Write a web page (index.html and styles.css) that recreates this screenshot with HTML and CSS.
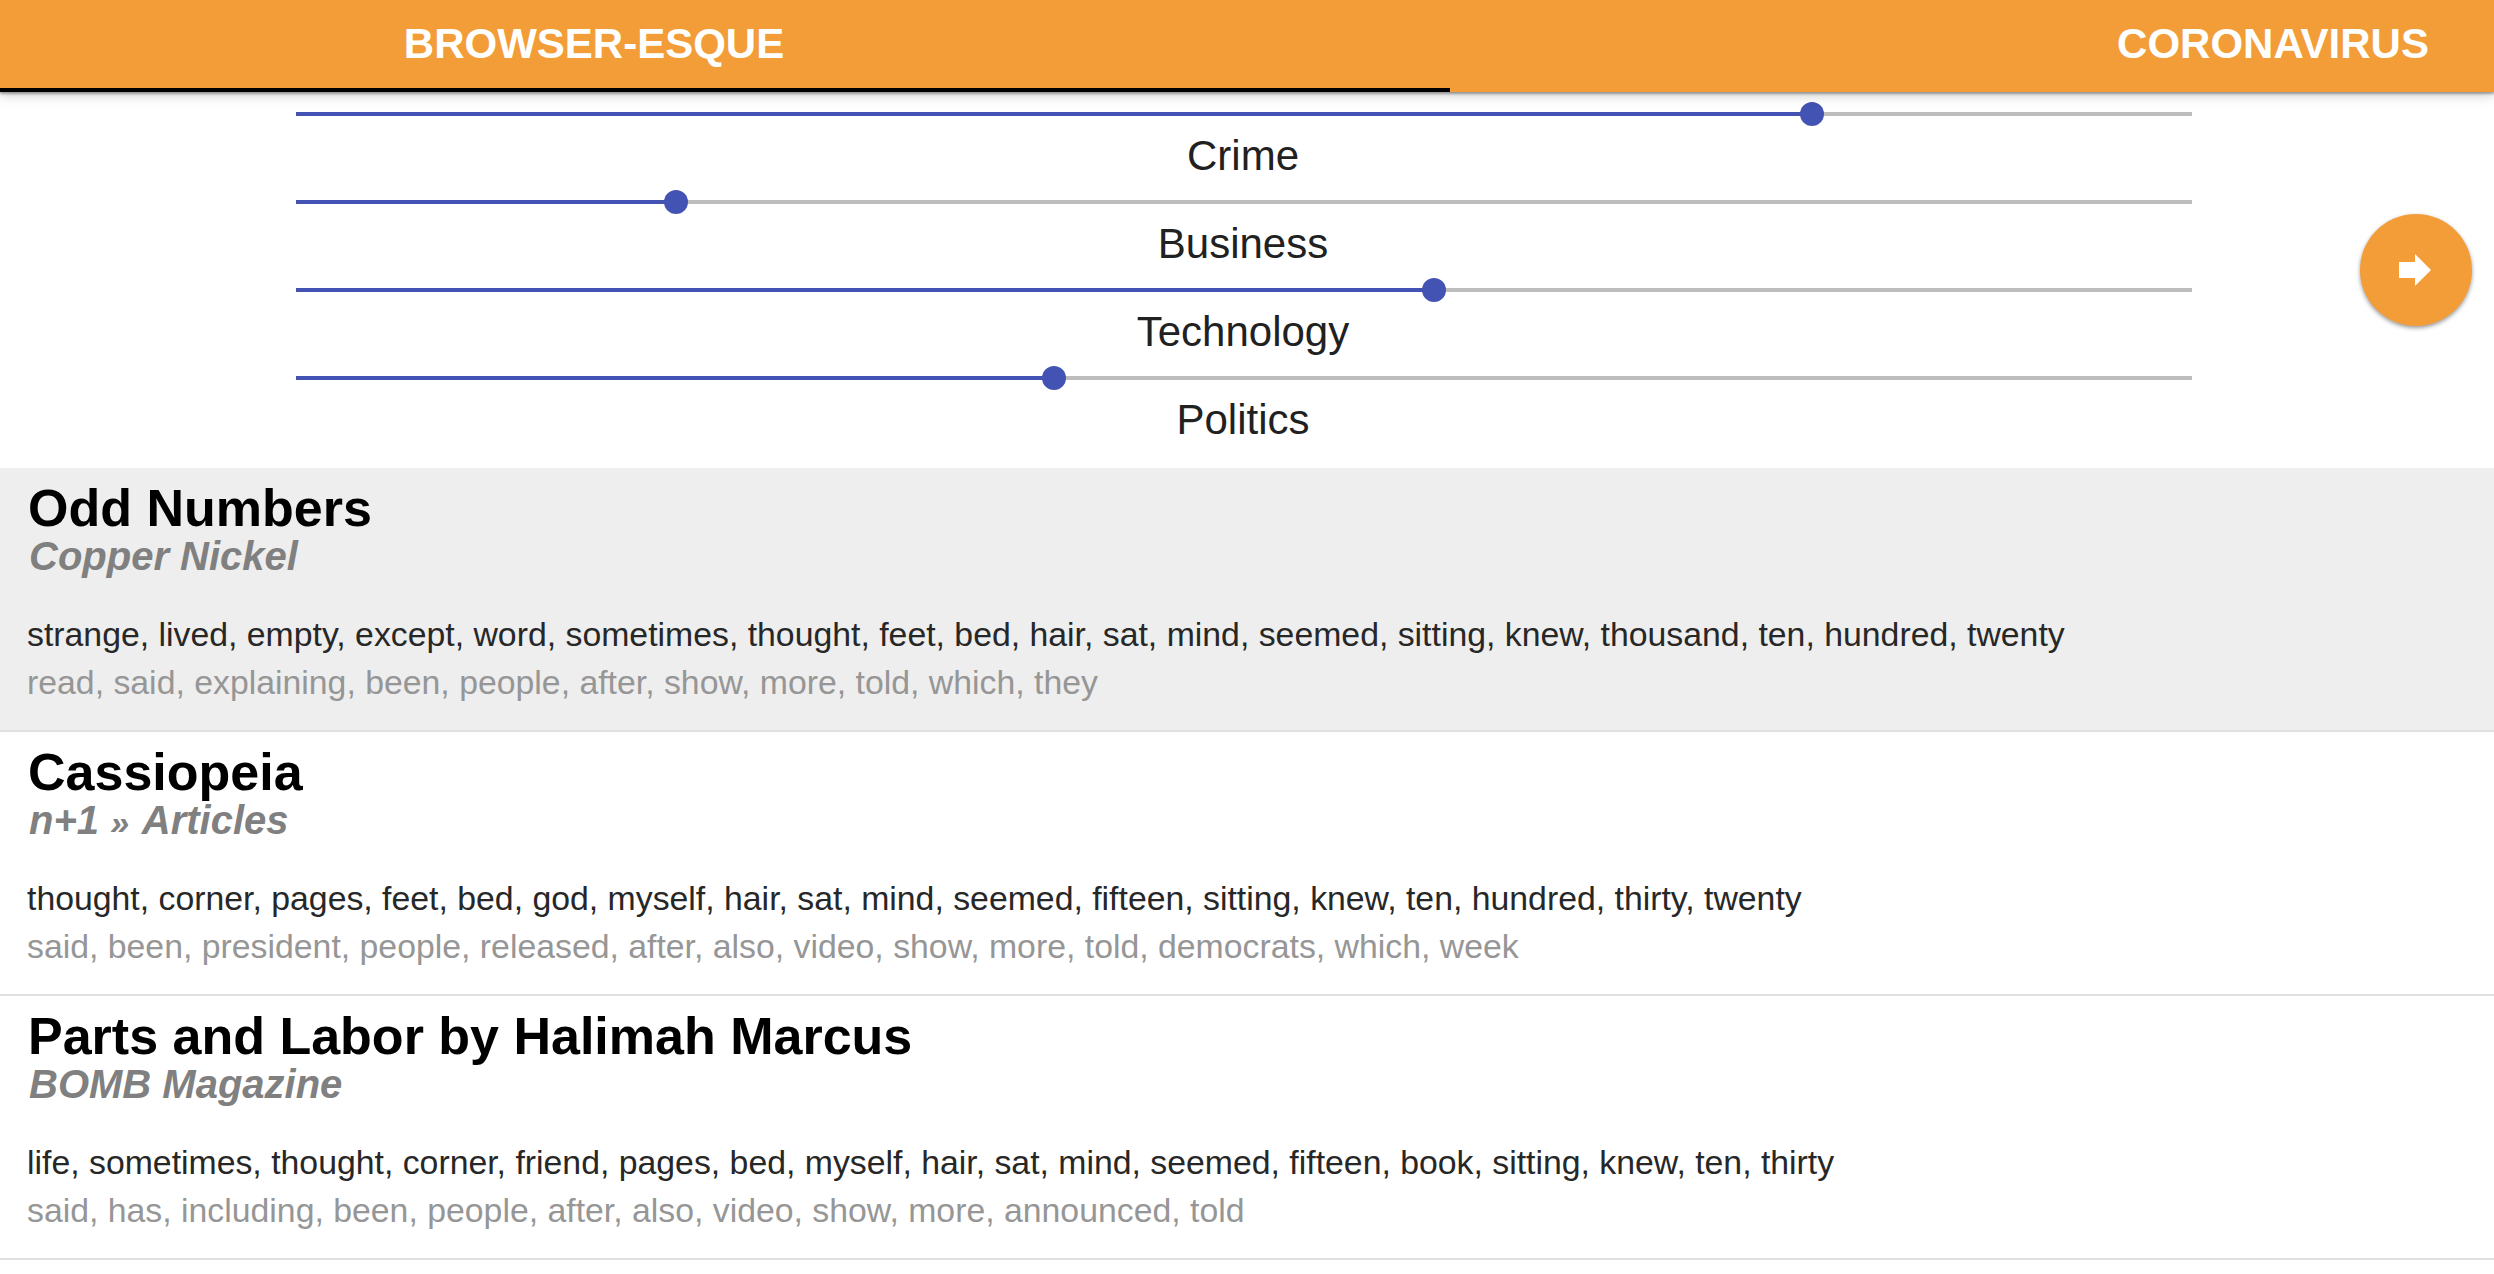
FILE: index.html
```html
<!DOCTYPE html>
<html lang="en">
<head>
<meta charset="utf-8">
<title>Browser-esque</title>
<link rel="stylesheet" href="styles.css">
</head>
<body>
<header class="app-bar">
  <nav class="tabs">
    <a class="tab tab-active">BROWSER-ESQUE</a>
    <a class="tab">CORONAVIRUS</a>
  </nav>
</header>
<section class="sliders">
  <div class="slider">
    <div class="track"><div class="fill" style="width:79.95%"></div><div class="thumb"></div></div>
    <div class="slider-label">Crime</div>
  </div>
  <div class="slider">
    <div class="track"><div class="fill" style="width:20.04%"></div><div class="thumb"></div></div>
    <div class="slider-label">Business</div>
  </div>
  <div class="slider">
    <div class="track"><div class="fill" style="width:60%"></div><div class="thumb"></div></div>
    <div class="slider-label">Technology</div>
  </div>
  <div class="slider">
    <div class="track"><div class="fill" style="width:40%"></div><div class="thumb"></div></div>
    <div class="slider-label">Politics</div>
  </div>
</section>
<main class="articles">
  <article class="article article-selected">
    <h2 class="title">Odd Numbers</h2>
    <h3 class="source">Copper Nickel</h3>
    <p class="words">strange, lived, empty, except, word, sometimes, thought, feet, bed, hair, sat, mind, seemed, sitting, knew, thousand, ten, hundred, twenty</p>
    <p class="words words-muted">read, said, explaining, been, people, after, show, more, told, which, they</p>
  </article>
  <article class="article">
    <h2 class="title">Cassiopeia</h2>
    <h3 class="source">n+1 <span class="guillemet">»</span> Articles</h3>
    <p class="words">thought, corner, pages, feet, bed, god, myself, hair, sat, mind, seemed, fifteen, sitting, knew, ten, hundred, thirty, twenty</p>
    <p class="words words-muted">said, been, president, people, released, after, also, video, show, more, told, democrats, which, week</p>
  </article>
  <article class="article">
    <h2 class="title">Parts and Labor by Halimah Marcus</h2>
    <h3 class="source">BOMB Magazine</h3>
    <p class="words">life, sometimes, thought, corner, friend, pages, bed, myself, hair, sat, mind, seemed, fifteen, book, sitting, knew, ten, thirty</p>
    <p class="words words-muted">said, has, including, been, people, after, also, video, show, more, announced, told</p>
  </article>
</main>
<button class="fab" aria-label="Next">
  <svg width="32" height="32" viewBox="0 0 32 32"><path d="M0 8h16V0l16 16-16 16v-8H0z" fill="#fff"/></svg>
</button>
</body>
</html>
```
FILE: styles.css
```css
* {
  box-sizing: border-box;
}

body {
  margin: 0;
  height: 100vh;
  overflow: hidden;
  background: #fff;
  color: #212121;
  font-family: "Liberation Sans", Arial, Helvetica, sans-serif;
}

.app-bar {
  position: relative;
  height: 92px;
  background: #f39d38;
  box-shadow: 0 2px 2px rgba(0, 0, 0, 0.3), 0 2px 12px rgba(0, 0, 0, 0.25);
}

/* The tab strip is wider than the window and scrolled part of the way. */
.tabs {
  display: flex;
  height: 100%;
  overflow: hidden;
}

.tab {
  flex: none;
  width: 1646px;
  color: #fff;
  font-size: 42px;
  font-weight: bold;
  line-height: 87px;
  text-align: center;
}

.tab-active {
  width: 1712px;
  margin-left: -262px;
  border-bottom: 4px solid #000;
}

.sliders {
  width: 1896px;
  height: 376px;
  margin-left: 296px;
  padding-top: 20px;
}

.slider {
  height: 88px;
}

.track {
  display: flex;
  align-items: center;
  height: 4px;
  background: #bdbdbd;
}

.fill {
  height: 4px;
  background: #4353b3;
}

.thumb {
  flex: none;
  width: 24px;
  height: 24px;
  margin-left: -12px;
  border-radius: 50%;
  background: #4353b3;
}

.slider-label {
  padding-right: 2px;
  font-size: 42px;
  line-height: 79px;
  text-align: center;
}

.article {
  height: 264px;
  padding: 12px 27px 0;
  border-bottom: 2px solid #e0e0e0;
}

.article-selected {
  background: #eee;
}

.title {
  margin: 0;
  padding-left: 1px;
  color: #000;
  font-size: 52px;
  line-height: 56px;
}

.source {
  margin: 0 0 34px;
  padding-left: 2px;
  color: #808080;
  font-size: 40px;
  font-style: italic;
  line-height: 40px;
}

.guillemet {
  display: inline-block;
  width: 22px;
  font-size: 34px;
  line-height: 1;
}

.words {
  margin: 0;
  color: #272727;
  font-size: 33.8px;
  line-height: 48px;
  white-space: nowrap;
}

.words-muted {
  color: #969696;
}

.fab {
  position: absolute;
  top: 214px;
  right: 22px;
  display: flex;
  align-items: center;
  justify-content: center;
  width: 112px;
  height: 112px;
  padding: 0 2px 0 0;
  border: 0;
  border-radius: 50%;
  background: #f39d38;
  box-shadow: 0 2px 4px rgba(0, 0, 0, 0.4);
}
```
